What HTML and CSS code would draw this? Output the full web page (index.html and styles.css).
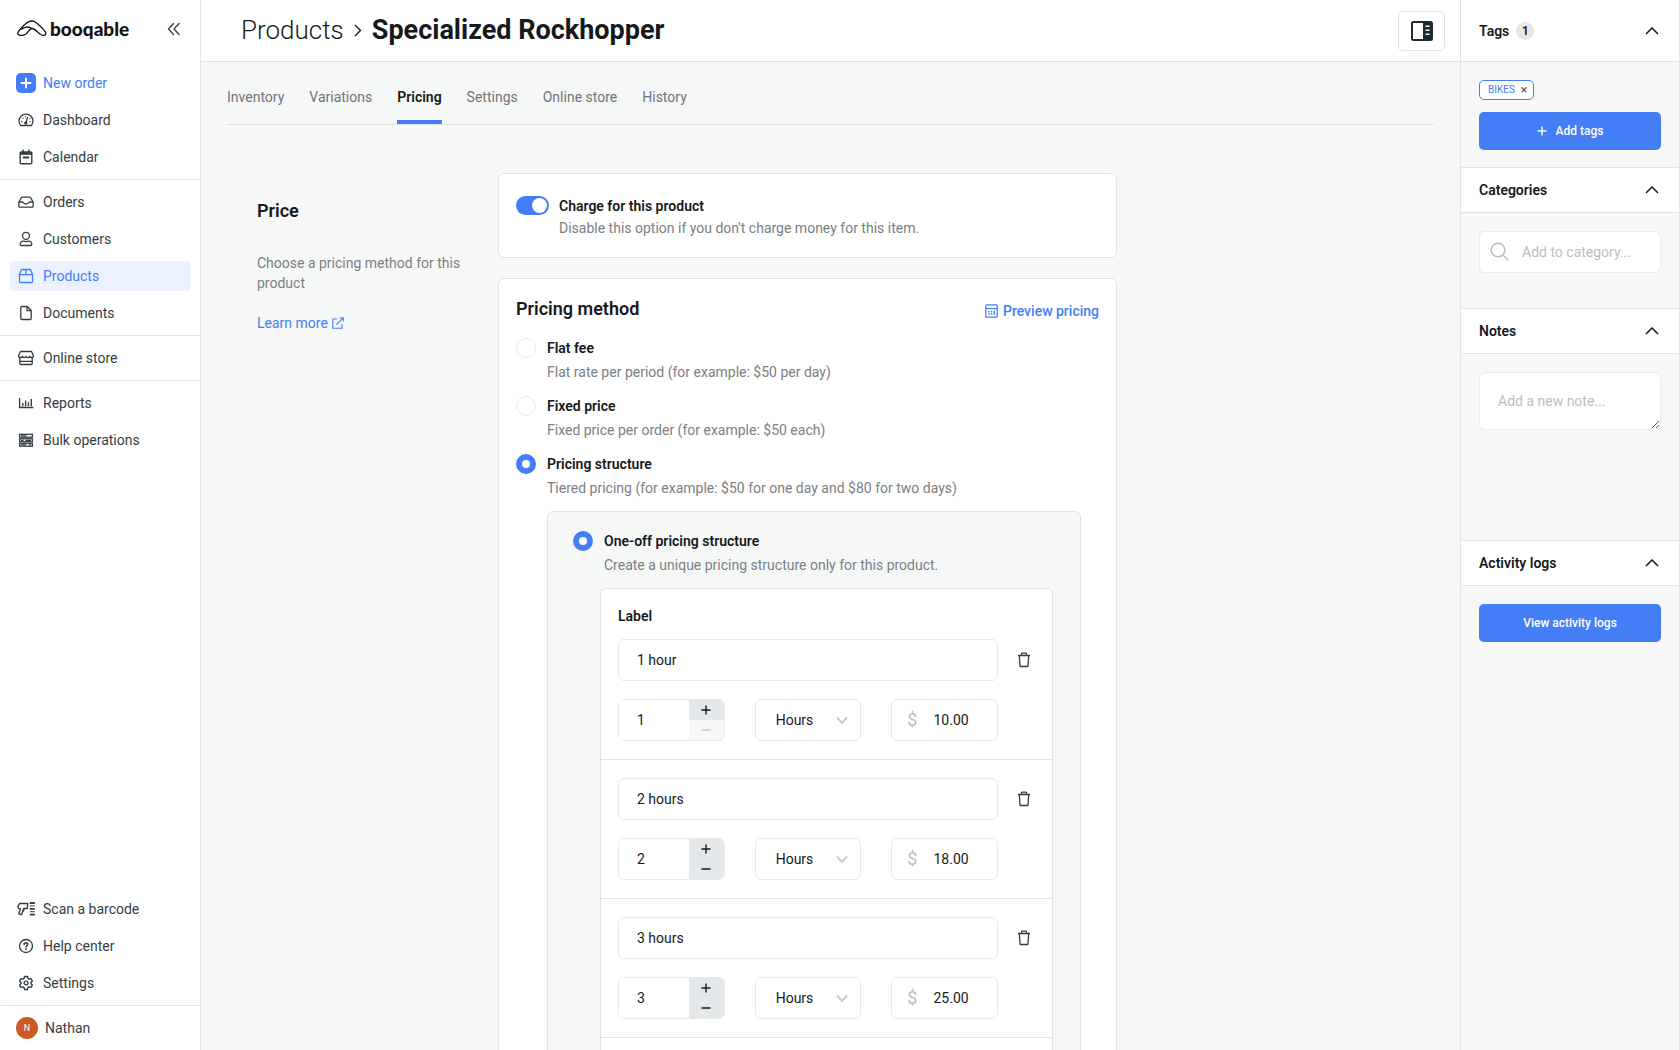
FILE: index.html
```html
<!DOCTYPE html>
<html lang="en">
<head>
<meta charset="utf-8">
<title>Specialized Rockhopper</title>
<meta name="viewport" content="width=device-width, initial-scale=1">
<link rel="stylesheet" href="styles.css">
</head>
<body>
<div class="app">
  <nav class="sidebar">
    <div class="brand">
      <a class="logo" href="#">
        <svg width="30" height="17" viewBox="0 0 30 17" fill="none" stroke="currentColor" stroke-width="1.3" stroke-linejoin="round"><path d="M8.500 14.300C5.500 16 1 15.800 .8 13.200 .8 11 8.500 3.200 11.500 1.800 14 .7 17 .9 19 2.500 22 5 27.500 10 28.700 12.600 29.500 15 27 16 24.500 15 20.500 13.300 18.500 8.500 15 8.500 12.500 8.500 11 12.800 8.500 14.300Z"/><path d="M4 9.500C8 6.500 12 6.500 15 8.500"/></svg>
        <span class="logo-text">booqable</span>
      </a>
      <button class="icon-btn" type="button" aria-label="Collapse menu">
        <svg width="14" height="14" viewBox="0 0 14 14" fill="none" stroke="currentColor" stroke-width="1.3" stroke-linecap="round" stroke-linejoin="round"><path d="M6.500 1.500 1.500 7l5 5.500M12 1.500 7 7l5 5.500"/></svg>
      </button>
    </div>
    <div class="nav-group nav-first">
      <a class="nav-item accent" href="#"><span class="nav-icon plus-tile"><svg width="20" height="20" viewBox="0 0 20 20" fill="none" stroke="#fff" stroke-width="2" stroke-linecap="round"><path d="M10 5.500v9M5.500 10h9"/></svg></span>New order</a>
      <a class="nav-item" href="#"><span class="nav-icon"><svg width="16" height="16" viewBox="0 0 16 16" fill="none" stroke="currentColor" stroke-width="1.3" stroke-linecap="round" stroke-linejoin="round"><path d="M2.600 13.500A7 7 0 1 1 13.400 13.500Z"/><path d="M8 10.800 9.500 5.500"/><circle cx="7.800" cy="11" r="1"/><path d="M3.800 9.500h.1M5 6.300h.1M12 9.500h.1M11.800 6.500h.1M7.300 4.800h.1"/></svg></span>Dashboard</a>
      <a class="nav-item" href="#"><span class="nav-icon"><svg width="16" height="16" viewBox="0 0 16 16" fill="none" stroke="currentColor" stroke-width="1.4" stroke-linejoin="round"><rect x="2.200" y="3" width="11.600" height="11.800" rx="1"/><path d="M2.200 4.500h11.600" stroke-width="2.600"/><path d="M5 1v2.500M11 1v2.500" stroke-linecap="round"/><path d="M4.800 8.500h6.400" stroke-width="2"/></svg></span>Calendar</a>
    </div>
    <div class="nav-group">
      <a class="nav-item" href="#"><span class="nav-icon"><svg width="16" height="16" viewBox="0 0 16 16" fill="none" stroke="currentColor" stroke-width="1.3" stroke-linejoin="round"><path d="M.8 8.200 3.300 3.700a1 1 0 0 1 .9-.5h7.600a1 1 0 0 1 .9.500l2.500 4.500v4a1 1 0 0 1-1 1H1.800a1 1 0 0 1-1-1Z"/><path d="M.8 8h3.700c.6 0 .7 2 3.500 2s2.900-2 3.500-2h3.700"/></svg></span>Orders</a>
      <a class="nav-item" href="#"><span class="nav-icon"><svg width="16" height="16" viewBox="0 0 16 16" fill="none" stroke="currentColor" stroke-width="1.3"><circle cx="8" cy="4.800" r="3.500"/><path d="M2.200 13.500c0-2 1.300-3.300 3.500-3.300.9 0 1.300.5 2.300.5s1.400-.5 2.300-.5c2.200 0 3.500 1.300 3.500 3.300 0 .7-.4 1-1 1H3.200c-.6 0-1-.3-1-1Z"/></svg></span>Customers</a>
      <a class="nav-item active" href="#"><span class="nav-icon"><svg width="16" height="16" viewBox="0 0 16 16" fill="none" stroke="currentColor" stroke-width="1.3" stroke-linejoin="round"><path d="M1.500 6.500 3.200 2.200a1 1 0 0 1 .9-.7h7.800a1 1 0 0 1 .9.700l1.700 4.300v7a1 1 0 0 1-1 1h-11a1 1 0 0 1-1-1ZM1.500 6.600h13M8 1.500v5"/></svg></span>Products</a>
      <a class="nav-item" href="#"><span class="nav-icon"><svg width="16" height="16" viewBox="0 0 16 16" fill="none" stroke="currentColor" stroke-width="1.3" stroke-linejoin="round"><path d="M3.800 1.500h5.400l4 4v8a1 1 0 0 1-1 1H3.800a1 1 0 0 1-1-1v-11a1 1 0 0 1 1-1Z"/><path d="M9 1.800V5.700h4"/></svg></span>Documents</a>
    </div>
    <div class="nav-group">
      <a class="nav-item" href="#"><span class="nav-icon"><svg width="16" height="16" viewBox="0 0 16 16" fill="none" stroke="currentColor" stroke-width="1.3" stroke-linejoin="round"><path d="M2.500 1.500h11l2 4.300c0 1-.8 1.700-1.900 1.700S11.800 7 11.800 6.200c0 .8-.8 1.300-1.900 1.300S8 7 8 6.200c0 .8-.8 1.300-1.900 1.300S4.200 7 4.200 6.200c0 .8-.7 1.300-1.800 1.300S.5 6.800.5 5.800Z"/><path d="M1.800 7.500v6a1 1 0 0 0 1 1h10.400a1 1 0 0 0 1-1v-6M1.800 11.300h12.400"/></svg></span>Online store</a>
    </div>
    <div class="nav-group nav-last">
      <a class="nav-item" href="#"><span class="nav-icon"><svg width="16" height="16" viewBox="0 0 16 16" fill="none" stroke="currentColor" stroke-width="1.3"><path d="M1.600 3v9.500h13.800"/><path d="M4.800 8v3.200M7.600 5.500v5.700M10.400 7.200v4M13.300 4v7.200" stroke-width="1.4"/></svg></span>Reports</a>
      <a class="nav-item" href="#"><span class="nav-icon"><svg width="16" height="16" viewBox="0 0 16 16" fill="none" stroke="currentColor" stroke-width="1.3"><rect x="1.600" y="2.300" width="12.800" height="2.900"/><rect x="1.600" y="6.800" width="12.800" height="2.900"/><rect x="1.600" y="11.300" width="12.800" height="2.900"/><path d="M3 3.800h5.500M3 8.300h2.500M7.500 8.300h5.500M3 12.800h5.500M11 12.800h2"/></svg></span>Bulk operations</a>
    </div>
    <div class="nav-group nav-bottom">
      <a class="nav-item" href="#"><span class="nav-icon"><svg width="18" height="16" viewBox="0 0 18 16" fill="none" stroke="currentColor" stroke-width="1.4" stroke-linejoin="round"><path d="M2.600 2.500h8.200l-.6 5H6.800l-2.300 6.200-2.700-.9L3.500 7.800C2 7.800.8 7 .9 5.700Z"/><path d="M6.800 7.500c.3 1.700 0 2.700-1.500 2.900"/><path d="M12.800 2h5M12.800 7.800h5M12.800 13.600h5" stroke-width="1.800"/><path d="M12.800 4.900h5M12.800 10.700h5" stroke-width="1"/></svg></span>Scan a barcode</a>
      <a class="nav-item" href="#"><span class="nav-icon"><svg width="16" height="16" viewBox="0 0 16 16" fill="none" stroke="currentColor" stroke-width="1.3" stroke-linecap="round"><circle cx="8" cy="8" r="6.500"/><path d="M6.200 6.500C6.200 5.300 7 4.700 8 4.700s1.800.6 1.800 1.600c0 1.400-1.800 1.400-1.800 2.700" stroke-width="1.6"/><path d="M8 11.200h.01" stroke-width="1.8"/></svg></span>Help center</a>
      <a class="nav-item" href="#"><span class="nav-icon"><svg width="16" height="16" viewBox="0 0 16 16" fill="none" stroke="currentColor" stroke-width="1.4" stroke-linejoin="round"><path d="M6.600 1.500h2.800l.5 1.900 1.200.7 1.900-.5 1.400 2.400L13 7.300v1.400l1.400 1.300-1.400 2.400-1.900-.5-1.200.7-.5 1.900H6.600l-.5-1.900-1.200-.7-1.900.5L1.600 10 3 8.700V7.300L1.600 6 3 3.600l1.900.5 1.200-.7Z"/><circle cx="8" cy="8" r="1.900"/></svg></span>Settings</a>
    </div>
    <a class="user" href="#"><span class="avatar">N</span>Nathan</a>
  </nav>

  <div class="main">
    <header class="page-head">
      <h1 class="title"><a class="title-parent" href="#">Products</a><svg width="8" height="14" viewBox="0 0 8 14" fill="none" stroke="currentColor" stroke-width="1.4"><path d="M1 2 6.500 7.500 1 13"/></svg><span>Specialized Rockhopper</span></h1>
      <button class="panel-btn" type="button" aria-label="Toggle side panel">
        <svg width="22" height="20" viewBox="0 0 22 20"><rect x="1" y="1" width="20" height="18" rx="1.500" fill="#fff" stroke="#1f2b33" stroke-width="2"/><path d="M12 1h8.500v18H12Z" fill="#1f2b33"/><path d="M14.500 5.200h4M14.500 9.200h4M14.500 13.200h4" stroke="#fff" stroke-width="1.600"/></svg>
      </button>
    </header>
    <div class="scroll">
      <nav class="tabs">
        <a class="tab" href="#">Inventory</a>
        <a class="tab" href="#">Variations</a>
        <a class="tab current" href="#">Pricing</a>
        <a class="tab" href="#">Settings</a>
        <a class="tab" href="#">Online store</a>
        <a class="tab" href="#">History</a>
      </nav>
      <div class="content">
        <section class="intro">
          <h2 class="heading">Price</h2>
          <p class="intro-text">Choose a pricing method for this product</p>
          <a class="link" href="#">Learn more<svg width="12" height="12" viewBox="0 0 12 12" fill="none" stroke="currentColor" stroke-width="1.1"><path d="M5 2H.8v9.200H10V7M7.500.7h3.800v3.800M11.200.8 4.500 7.500"/></svg></a>
        </section>
        <div class="cards">
          <section class="card charge">
            <input class="switch" type="checkbox" id="charge" checked>
            <div class="charge-copy">
              <label class="strong" for="charge">Charge for this product</label>
              <p class="hint">Disable this option if you don't charge money for this item.</p>
            </div>
          </section>
          <section class="card method">
            <div class="method-head">
              <h2 class="heading">Pricing method</h2>
              <button class="preview" type="button"><svg width="13" height="14" viewBox="0 0 13 14" fill="none" stroke="currentColor" stroke-width="1.2"><rect x=".8" y=".8" width="11.400" height="12.400" rx=".8"/><path d="M.8 4.600h11.400"/><path d="M3 7.500h1.500M5.800 7.500h1.500M3 10h1.500M5.800 10h1.500M9.300 6.800v4" stroke-width="1.4"/></svg>Preview pricing</button>
            </div>
            <div class="options">
              <div class="option">
                <input class="radio" type="radio" name="method" id="flat">
                <div class="option-copy"><label class="strong" for="flat">Flat fee</label><p class="hint">Flat rate per period (for example: $50 per day)</p></div>
              </div>
              <div class="option">
                <input class="radio" type="radio" name="method" id="fixed">
                <div class="option-copy"><label class="strong" for="fixed">Fixed price</label><p class="hint">Fixed price per order (for example: $50 each)</p></div>
              </div>
              <div class="option">
                <input class="radio" type="radio" name="method" id="structure" checked>
                <div class="option-copy"><label class="strong" for="structure">Pricing structure</label><p class="hint">Tiered pricing (for example: $50 for one day and $80 for two days)</p></div>
              </div>
            </div>
            <div class="structure">
              <div class="option">
                <input class="radio" type="radio" name="kind" id="oneoff" checked>
                <div class="option-copy"><label class="strong" for="oneoff">One-off pricing structure</label><p class="hint">Create a unique pricing structure only for this product.</p></div>
              </div>
              <div class="tiers">
                <div class="tier tier-first">
                  <label class="strong tier-label" for="label1">Label</label>
                  <input class="field" type="text" id="label1" value="1 hour">
                  <button class="trash" type="button" aria-label="Delete"><svg width="14" height="16" viewBox="0 0 14 16" fill="none" stroke="currentColor" stroke-width="1.3" stroke-linejoin="round"><path d="M1 3.500h12M2.300 3.500l.7 10.300a.8.800 0 0 0 .8.700h6.400a.8.800 0 0 0 .8-.7l.7-10.300M4.500 3.300V2a.8.800 0 0 1 .8-.8h3.400a.8.800 0 0 1 .8.800v1.300"/></svg></button>
                  <div class="tier-row">
                    <div class="stepper"><input class="step-input" type="text" aria-label="Quantity" value="1"><div class="step-btns"><button class="step" type="button" aria-label="Increase"><svg width="10" height="10" viewBox="0 0 10 10" stroke="currentColor" stroke-width="1.4"><path d="M5 .5v9M.5 5h9"/></svg></button><button class="step" type="button" aria-label="Decrease" disabled><svg width="10" height="10" viewBox="0 0 10 10" stroke="currentColor" stroke-width="1.4"><path d="M.5 5h9"/></svg></button></div></div>
                    <div class="select-wrap"><select class="field select" aria-label="Period"><option>Hours</option></select><svg class="caret" width="12" height="10" viewBox="0 0 12 10" fill="none" stroke="currentColor" stroke-width="2"><path d="M1 2.500l5 5.500L11 2.500"/></svg></div>
                    <label class="money"><span class="currency">$</span><input class="money-input" type="text" value="10.00"></label>
                  </div>
                </div>
                <div class="tier">
                  <input class="field" type="text" aria-label="Label" value="2 hours">
                  <button class="trash" type="button" aria-label="Delete"><svg width="14" height="16" viewBox="0 0 14 16" fill="none" stroke="currentColor" stroke-width="1.3" stroke-linejoin="round"><path d="M1 3.500h12M2.300 3.500l.7 10.300a.8.800 0 0 0 .8.700h6.400a.8.800 0 0 0 .8-.7l.7-10.300M4.500 3.300V2a.8.800 0 0 1 .8-.8h3.400a.8.800 0 0 1 .8.800v1.300"/></svg></button>
                  <div class="tier-row">
                    <div class="stepper"><input class="step-input" type="text" aria-label="Quantity" value="2"><div class="step-btns"><button class="step" type="button" aria-label="Increase"><svg width="10" height="10" viewBox="0 0 10 10" stroke="currentColor" stroke-width="1.4"><path d="M5 .5v9M.5 5h9"/></svg></button><button class="step" type="button" aria-label="Decrease"><svg width="10" height="10" viewBox="0 0 10 10" stroke="currentColor" stroke-width="1.4"><path d="M.5 5h9"/></svg></button></div></div>
                    <div class="select-wrap"><select class="field select" aria-label="Period"><option>Hours</option></select><svg class="caret" width="12" height="10" viewBox="0 0 12 10" fill="none" stroke="currentColor" stroke-width="2"><path d="M1 2.500l5 5.500L11 2.500"/></svg></div>
                    <label class="money"><span class="currency">$</span><input class="money-input" type="text" value="18.00"></label>
                  </div>
                </div>
                <div class="tier">
                  <input class="field" type="text" aria-label="Label" value="3 hours">
                  <button class="trash" type="button" aria-label="Delete"><svg width="14" height="16" viewBox="0 0 14 16" fill="none" stroke="currentColor" stroke-width="1.3" stroke-linejoin="round"><path d="M1 3.500h12M2.300 3.500l.7 10.300a.8.800 0 0 0 .8.700h6.400a.8.800 0 0 0 .8-.7l.7-10.300M4.500 3.300V2a.8.800 0 0 1 .8-.8h3.400a.8.800 0 0 1 .8.800v1.300"/></svg></button>
                  <div class="tier-row">
                    <div class="stepper"><input class="step-input" type="text" aria-label="Quantity" value="3"><div class="step-btns"><button class="step" type="button" aria-label="Increase"><svg width="10" height="10" viewBox="0 0 10 10" stroke="currentColor" stroke-width="1.4"><path d="M5 .5v9M.5 5h9"/></svg></button><button class="step" type="button" aria-label="Decrease"><svg width="10" height="10" viewBox="0 0 10 10" stroke="currentColor" stroke-width="1.4"><path d="M.5 5h9"/></svg></button></div></div>
                    <div class="select-wrap"><select class="field select" aria-label="Period"><option>Hours</option></select><svg class="caret" width="12" height="10" viewBox="0 0 12 10" fill="none" stroke="currentColor" stroke-width="2"><path d="M1 2.500l5 5.500L11 2.500"/></svg></div>
                    <label class="money"><span class="currency">$</span><input class="money-input" type="text" value="25.00"></label>
                  </div>
                </div>
              </div>
            </div>
          </section>
        </div>
      </div>
    </div>
  </div>

  <aside class="panel">
    <section>
      <button class="panel-head panel-head-tall" type="button"><span class="panel-title">Tags <span class="count">1</span></span><svg class="chev" width="14" height="8" viewBox="0 0 14 8" fill="none" stroke="currentColor" stroke-width="1.5"><path d="M1 7 7 1l6 6"/></svg></button>
      <div class="panel-body body-tags">
        <span class="tag">BIKES<button class="tag-x" type="button">×</button></span>
        <button class="primary" type="button"><svg width="10" height="10" viewBox="0 0 10 10" stroke="currentColor" stroke-width="1.5"><path d="M5 .5v9M.5 5h9"/></svg>Add tags</button>
      </div>
    </section>
    <section>
      <button class="panel-head" type="button"><span class="panel-title">Categories</span><svg class="chev" width="14" height="8" viewBox="0 0 14 8" fill="none" stroke="currentColor" stroke-width="1.5"><path d="M1 7 7 1l6 6"/></svg></button>
      <div class="panel-body body-categories">
        <label class="search"><svg width="20" height="20" viewBox="0 0 20 20" fill="none" stroke="currentColor" stroke-width="1.5"><circle cx="8" cy="8" r="6.800"/><path d="M13 13l5.500 5.500"/></svg><input class="search-input" type="text" placeholder="Add to category..."></label>
      </div>
    </section>
    <section>
      <button class="panel-head" type="button"><span class="panel-title">Notes</span><svg class="chev" width="14" height="8" viewBox="0 0 14 8" fill="none" stroke="currentColor" stroke-width="1.5"><path d="M1 7 7 1l6 6"/></svg></button>
      <div class="panel-body body-notes">
        <textarea class="note" rows="1" aria-label="Note" placeholder="Add a new note..."></textarea>
      </div>
    </section>
    <section>
      <button class="panel-head" type="button"><span class="panel-title">Activity logs</span><svg class="chev" width="14" height="8" viewBox="0 0 14 8" fill="none" stroke="currentColor" stroke-width="1.5"><path d="M1 7 7 1l6 6"/></svg></button>
      <div class="panel-body">
        <button class="primary" type="button">View activity logs</button>
      </div>
    </section>
  </aside>
</div>
</body>
</html>
```
FILE: styles.css
```css
:root {
  --blue: #437ef7;
  --ink: #16191b;
  --nav: #343d43;
  --muted: #7b8082;
  --line: #e0e4e4;
  --field-line: #e9ebeb;
  --ghost: #bbbebf;
  --page: #f6f8f8;
}

* { box-sizing: border-box; }

body {
  margin: 0;
  font: 14px/20px Roboto, "Liberation Sans", sans-serif;
  color: var(--ink);
  background: var(--page);
}

h1, h2, p { margin: 0; }
a { color: inherit; text-decoration: none; }
button, input, select, textarea { font: inherit; color: inherit; margin: 0; }
button { padding: 0; border: 0; background: none; cursor: pointer; }
svg { display: block; flex: none; }

.app { display: flex; height: 100vh; }

/* Sidebar */
.sidebar {
  flex: none;
  display: flex;
  flex-direction: column;
  width: 201px;
  background: #fff;
  border-right: 1px solid var(--line);
  color: var(--nav);
}
.brand {
  display: flex;
  align-items: center;
  justify-content: space-between;
  height: 61px;
  padding: 0 19px 4px 17px;
}
.logo { display: flex; align-items: center; gap: 3px; color: #111; }
.logo-text { font: 900 19px/24px Lato, sans-serif; }
.icon-btn { color: var(--nav); }
.nav-group {
  display: flex;
  flex-direction: column;
  gap: 7px;
  padding: 7px 9px 7px 10px;
  border-bottom: 1px solid var(--line);
}
.nav-last { border-bottom: 0; }
.nav-bottom { margin-top: auto; }
.nav-item {
  display: flex;
  align-items: center;
  gap: 7px;
  height: 30px;
  padding: 0 6px;
  border-radius: 4px;
}
.nav-icon { display: flex; justify-content: center; width: 20px; }
.plus-tile { border-radius: 5px; background: var(--blue); }
.accent { color: var(--blue); }
.active { color: var(--blue); background: #ebf1fe; }
.user { display: flex; align-items: center; gap: 7px; height: 44px; padding: 0 16px; }
.avatar {
  width: 22px;
  border-radius: 50%;
  background: #cc5a22;
  color: #fff;
  font-size: 9px;
  line-height: 22px;
  text-align: center;
}

/* Main column */
.main { flex: 1; min-width: 0; display: flex; flex-direction: column; }
.page-head {
  flex: none;
  display: flex;
  align-items: center;
  justify-content: space-between;
  height: 62px;
  padding: 0 15px 0 40px;
  background: #fff;
  border-bottom: 1px solid var(--line);
}
.title {
  display: flex;
  align-items: center;
  gap: 10px;
  padding-bottom: 2px;
  font-size: 27px;
  line-height: 36px;
  font-weight: 700;
}
.title-parent { font-size: 26px; font-weight: 300; }
.panel-btn {
  display: grid;
  place-items: center;
  width: 47px;
  height: 40px;
  border: 1px solid var(--line);
  border-radius: 5px;
}
.scroll { flex: 1; min-height: 0; overflow-y: auto; scrollbar-width: none; padding: 0 26px; }
.tabs {
  display: flex;
  gap: 25px;
  padding-top: 25px;
  border-bottom: 1px solid var(--line);
  color: #6f7476;
}
.tab { padding-bottom: 13px; border-bottom: 4px solid transparent; }
.current { color: var(--ink); font-weight: 600; border-color: var(--blue); }
.content {
  display: grid;
  grid-template-columns: 221px minmax(0, 619px);
  gap: 20px;
  padding: 48px 30px;
}
.intro { padding-top: 26px; color: var(--muted); }
.heading { color: var(--ink); font-size: 18px; line-height: 24px; font-weight: 600; }
.intro-text { margin: 30px 0 20px; }
.link { display: flex; align-items: center; gap: 4px; color: var(--blue); }

.cards { display: flex; flex-direction: column; gap: 20px; }
.card { background: #fff; border: 1px solid var(--line); border-radius: 6px; }
.strong { display: block; font-weight: 600; }
.hint { color: var(--muted); }
.charge { display: flex; gap: 10px; padding: 22px 17px 19px; }
.charge-copy { display: flex; flex-direction: column; gap: 2px; }
.switch {
  appearance: none;
  flex: none;
  display: flex;
  justify-content: flex-end;
  width: 33px;
  height: 19px;
  padding: 2px;
  border-radius: 10px;
  background: var(--blue);
}
.switch::before { content: ""; width: 15px; height: 15px; border-radius: 50%; background: #fff; }
.method { padding: 18px 17px 40px; }
.method-head { display: flex; justify-content: space-between; align-items: flex-end; margin-bottom: 17px; }
.preview { display: flex; align-items: center; gap: 5px; color: var(--blue); font-weight: 500; }
.options { display: flex; flex-direction: column; gap: 14px; }
.option { display: flex; gap: 11px; }
.option-copy { display: flex; flex-direction: column; gap: 4px; }
.radio {
  appearance: none;
  flex: none;
  width: 20px;
  height: 20px;
  border: 1px solid var(--field-line);
  border-radius: 50%;
  background: #fff;
}
.radio:checked { border: 6px solid var(--blue); }

.structure {
  margin: 13px 18px 0 31px;
  padding: 19px 27px 40px 25px;
  border: 1px solid var(--line);
  border-radius: 6px;
  background: var(--page);
}
.tiers {
  margin: 13px 0 0 27px;
  padding-bottom: 40px;
  border: 1px solid var(--line);
  border-radius: 6px;
  background: #fff;
}
.tier {
  display: grid;
  grid-template-columns: minmax(0, 1fr) 54px;
  row-gap: 18px;
  padding: 18px 0 18px 17px;
  border-bottom: 1px solid var(--line);
}
.tier-first { padding-top: 17px; }
.tier-label { grid-column: 1 / -1; margin-bottom: -5px; }
.field, .stepper, .money, .search, .note {
  width: 100%;
  height: 42px;
  border: 1px solid var(--field-line);
  border-radius: 6px;
  background: #fff;
}
.field { padding: 0 18px; }
.trash { display: grid; place-items: center; padding-right: 2px; color: var(--nav); }
.tier-row { display: grid; grid-template-columns: repeat(3, minmax(0, 1fr)); gap: 30px; }
.stepper { display: flex; overflow: hidden; }
.step-input { flex: 1; min-width: 0; padding: 0 18px; border: 0; }
.step-btns { flex: none; width: 35px; display: flex; flex-direction: column; background: #e4e8ea; }
.step { flex: 1; display: grid; place-items: center; }
.step:disabled { color: #c6cacc; background: #f5f7f8; }
.select-wrap { display: grid; align-items: center; }
.select-wrap > * { grid-area: 1 / 1; }
.select { appearance: none; padding: 0 20px; }
.caret { justify-self: end; margin-right: 13px; color: #c9cccd; pointer-events: none; }
.money { display: flex; align-items: center; gap: 16px; padding-left: 15px; }
.currency { color: var(--ghost); font-size: 18px; }
.money-input { flex: 1; min-width: 0; border: 0; padding: 0; }

/* Right panel */
.panel {
  flex: none;
  width: 220px;
  border: 0 solid var(--line);
  border-width: 0 1px;
  background: #f7f7f7;
}
.panel-head {
  display: flex;
  align-items: center;
  justify-content: space-between;
  width: 100%;
  height: 46px;
  padding: 0 20px 0 18px;
  border: 1px solid var(--line);
  border-width: 1px 0;
  background: #fff;
  font-weight: 600;
}
.panel-head-tall { height: 62px; border-top: 0; }
.panel-title { display: flex; align-items: center; gap: 7px; }
.count { width: 18px; border-radius: 50%; background: #e6e7e7; font-size: 12px; line-height: 18px; text-align: center; }
.panel-body { padding: 18px 18px 17px; }
.body-tags { display: flex; flex-direction: column; align-items: flex-start; gap: 12px; }
.body-categories { height: 95px; }
.body-notes { height: 186px; }
.tag {
  display: flex;
  align-items: center;
  gap: 6px;
  height: 20px;
  padding: 0 6px 0 8px;
  border: 1px solid var(--blue);
  border-radius: 5px;
  background: #fff;
  color: var(--blue);
  font-size: 10px;
}
.tag-x { color: #555; font-size: 12px; line-height: 12px; }
.primary {
  display: flex;
  align-items: center;
  justify-content: center;
  gap: 9px;
  width: 100%;
  height: 38px;
  border-radius: 5px;
  background: var(--blue);
  color: #fff;
  font-size: 12px;
  font-weight: 500;
}
.search { display: flex; align-items: center; gap: 12px; padding: 0 10px; color: var(--ghost); }
.search-input { flex: 1; min-width: 0; border: 0; padding: 0; }
.note { display: block; height: 58px; padding: 18px; resize: both; }
::placeholder { color: var(--ghost); opacity: 1; }
```
